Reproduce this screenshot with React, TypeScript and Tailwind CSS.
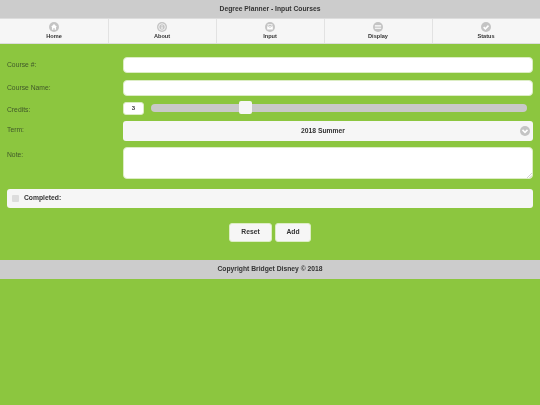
const tabs = [
  {
    name: "Home",
    glyph: <path d="M8 3.2 3.2 8h1.5v4.2h2.4V9.5h1.8v2.7h2.4V8h1.5z" fill="white" />,
  },
  {
    name: "About",
    glyph: (
      <>
        <circle cx="8" cy="8" r="5.2" fill="none" stroke="white" strokeWidth="1.2" />
        <path d="M7.2 7h1.6v4.2H7.2zM7.2 4.6h1.6v1.5H7.2z" fill="white" />
      </>
    ),
  },
  {
    name: "Input",
    glyph: (
      <>
        <path d="M3.5 6.5 8 9l4.5-2.5v5.5h-9z" fill="white" />
        <path d="M4.5 5.5 8 7.7l3.5-2.2V4h-7z" fill="none" stroke="white" strokeWidth="1" />
      </>
    ),
  },
  {
    name: "Display",
    glyph: <path d="M3 5.2h10v1.8H3zM3 9h10v1.8H3z" fill="white" />,
  },
  {
    name: "Status",
    glyph: <path d="M4.2 8.2 7 11l5-5.2" fill="none" stroke="white" strokeWidth="2.4" />,
  },
]

function NavBar() {
  return (
    <nav className="grid h-[26px] grid-cols-5 border-y border-[#dddddd] bg-[#f6f6f6]">
      {tabs.map((tab, i) => (
        <div
          key={tab.name}
          className={`flex flex-col items-center pt-[3px] ${i > 0 ? "shadow-[inset_1px_0_0_#e2e2e2]" : ""}`}
        >
          <svg viewBox="0 0 16 16" className="h-[10px] w-[10px]">
            <circle cx="8" cy="8" r="8" fill="#c4c4c4" />
            {tab.glyph}
          </svg>
          <span className="mt-[1px] text-[5.6px] leading-[7px] font-bold text-[#333333]">{tab.name}</span>
        </div>
      ))}
    </nav>
  )
}

function Row({
  label,
  labelClass,
  children,
  className,
}: {
  label: string
  labelClass: string
  children: React.ReactNode
  className: string
}) {
  return (
    <div className={`flex ${className}`}>
      <label className={`w-[116px] shrink-0 text-[6.75px] leading-[9px] text-[#41592a] ${labelClass}`}>{label}</label>
      <div className="min-w-0 flex-1">{children}</div>
    </div>
  )
}

export default function App() {
  return (
    <div className="min-h-[405px] bg-[#8cc63f] font-['Liberation_Sans',Arial,sans-serif] will-change-transform">
      <header className="flex h-[18px] items-center justify-center bg-[#cccccc] text-[6.75px] font-bold text-[#333333]">
        Degree Planner - Input Courses
      </header>
      <NavBar />
      <main className="px-[7px] pt-[13px]">
        <Row label="Course #:" labelClass="-translate-y-[1px]" className="items-center">
          <div className="h-[16px] rounded-[4px] border border-[#dcedc4] bg-white" />
        </Row>
        <Row label="Course Name:" labelClass="-translate-y-[1px]" className="mt-[7px] items-center">
          <div className="h-[16px] rounded-[4px] border border-[#dcedc4] bg-white" />
        </Row>
        <Row label="Credits:" labelClass="translate-y-[1px]" className="mt-[6px] items-center">
          <div className="flex items-center">
            <div className="flex h-[13px] w-[21px] items-center justify-center rounded-[3px] border border-[#dcedc4] bg-white text-[6px] font-bold text-[#333333]">
              3
            </div>
            <div className="relative ml-[7px] mr-[6px] h-[8px] flex-1 -translate-y-[1px] rounded-full bg-[#c9c9c9]">
              <div className="absolute left-[88px] top-[-2.5px] h-[13px] w-[13px] rounded-[2px] bg-[#f6f6f6]" />
            </div>
          </div>
        </Row>
        <Row label="Term:" labelClass="pt-[4px]" className="mt-[6px]">
          <div className="relative flex h-[20px] items-center justify-center rounded-[3px] bg-[#f6f6f6] pr-[10px] text-[6.75px] font-bold text-[#333333]">
            2018 Summer
            <svg viewBox="0 0 16 16" className="absolute right-[3px] top-[5px] h-[10px] w-[10px]">
              <circle cx="8" cy="8" r="8" fill="#c4c4c4" />
              <path d="M4 6.2 8 10.2l4-4" fill="none" stroke="white" strokeWidth="2.4" />
            </svg>
          </div>
        </Row>
        <Row label="Note:" labelClass="pt-[3px]" className="mt-[6px]">
          <div className="relative h-[32px] rounded-[4px] border border-[#dcedc4] bg-white">
            <svg viewBox="0 0 6 6" className="absolute bottom-0 right-0 h-[5px] w-[5px]">
              <path d="M0 6 6 0M3 6 6 3" stroke="#bbbbbb" strokeWidth="0.8" />
            </svg>
          </div>
        </Row>
        <div className="mt-[10px] flex h-[19px] items-center rounded-[3px] bg-[#f6f6f6] pl-[5px]">
          <span className="h-[7px] w-[7px] rounded-[1px] bg-[#dddddd]" />
          <span className="ml-[5px] text-[6.75px] font-bold text-[#333333]">Completed:</span>
        </div>
        <div className="mt-[15px] flex justify-center gap-[3px]">
          <div className="flex h-[19px] w-[43px] items-center justify-center rounded-[3px] border border-[#dcedc4] bg-[#f6f6f6] text-[6.75px] font-bold text-[#333333]">
            Reset
          </div>
          <div className="flex h-[19px] w-[36px] items-center justify-center rounded-[3px] border border-[#dcedc4] bg-[#f6f6f6] text-[6.75px] font-bold text-[#333333]">
            Add
          </div>
        </div>
      </main>
      <footer className="mt-[18px] flex h-[19px] items-center justify-center bg-[#cccccc] text-[6.75px] font-bold text-[#333333]">
        Copyright Bridget Disney © 2018
      </footer>
    </div>
  )
}
